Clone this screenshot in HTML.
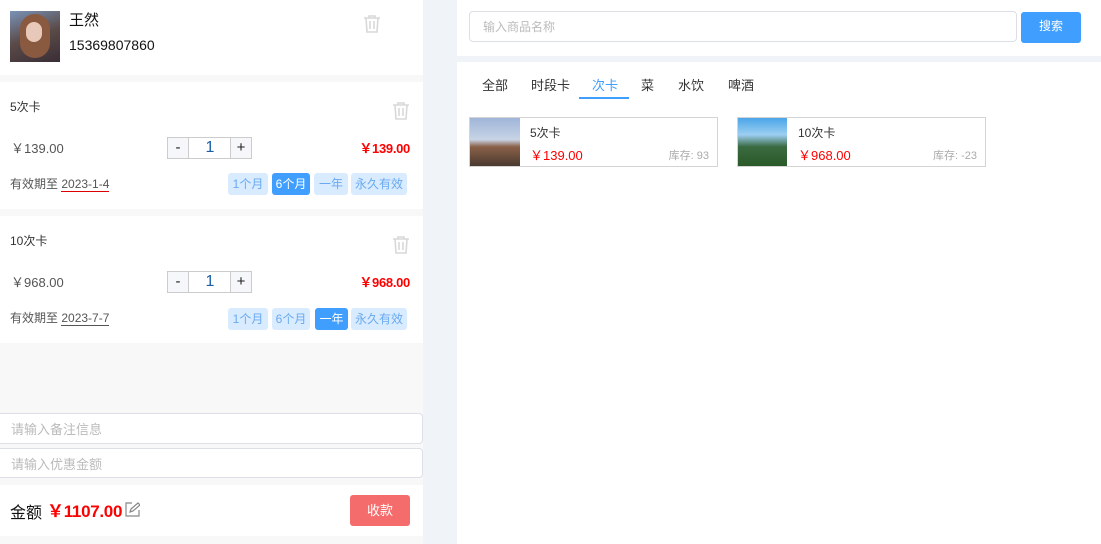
<!DOCTYPE html>
<html><head><meta charset="utf-8"><style>
*{margin:0;padding:0;box-sizing:border-box}
body{width:1101px;height:544px;overflow:hidden;background:#f0f3f7;font-family:"Liberation Sans","Noto Sans CJK SC",sans-serif;position:relative;color:#333}
.a{position:absolute}
.left{left:0;top:0;width:423px;height:544px;background:#f8f8f8}
.w{background:#fff}
.t{font-size:12px}
.tag{position:absolute;height:22px;line-height:22px;font-size:12px;text-align:center;border-radius:3px;background:#d9ecff;color:#6aa9f0}
.tag.on{background:#409eff;color:#fff}
.step{position:absolute;top:0;width:22px;height:22px;border:1px solid #ccc;background:#f5f7fa;text-align:center;line-height:19px;font-size:15px;color:#222}
.inp{position:absolute;height:22px;border:1px solid #ccc;border-left:none;border-right:none;top:0;text-align:center;font-size:16px;line-height:19px;color:#1a5ea8}
</style></head><body>
<div class="a left">
 <div class="a w" style="left:0;top:0;width:423px;height:75px">
  <div class="a" style="left:10px;top:11px;width:50px;height:51px;background:linear-gradient(160deg,#7a93b8,#5a4a48 50%,#3a2e35)"></div>
  <div class="a" style="left:20px;top:14px;width:30px;height:44px;border-radius:15px;background:#8a5a40"></div>
  <div class="a" style="left:26px;top:22px;width:16px;height:20px;border-radius:8px;background:#e8c8b8"></div>
  <div class="a" style="left:69px;top:9px;font-size:15px;color:#111">王然</div>
  <div class="a" style="left:69px;top:37px;font-size:14px;color:#111">15369807860</div>
  <svg class="a" style="left:363px;top:14px" width="18" height="20" viewBox="0 0 18 20" fill="none" stroke="#d8d8d8" stroke-width="1.6"><path d="M1 4h16M6 4V2h6v2M3 4l1 14h10l1-14M7 7v8M11 7v8"/></svg>
 </div>
 <div class="a w" style="left:0;top:82px;width:423px;height:127px">
  <div class="a t" style="left:10px;top:16px">5次卡</div>
  <svg class="a" style="left:392px;top:19px" width="18" height="20" viewBox="0 0 18 20" fill="none" stroke="#d8d8d8" stroke-width="1.6"><path d="M1 4h16M6 4V2h6v2M3 4l1 14h10l1-14M7 7v8M11 7v8"/></svg>
  <div class="a" style="left:11px;top:56px;font-size:13px;color:#555">￥139.00</div>
  <div class="a" style="left:167px;top:55px;width:85px;height:22px"><div class="step" style="left:0">-</div><div class="inp" style="left:22px;width:42px">1</div><div class="step" style="left:63px">+</div></div>
  <div class="a" style="right:13px;top:56px;font-size:13px;color:#f00;font-weight:bold;letter-spacing:-0.3px">￥139.00</div>
  <div class="a" style="left:10px;top:93px;font-size:12px;color:#555">有效期至 <span style="border-bottom:1px solid #d00">2023-1-4</span></div>
  <div class="tag" style="left:228px;top:91px;width:40px">1个月</div>
  <div class="tag on" style="left:272px;top:91px;width:38px">6个月</div>
  <div class="tag" style="left:314px;top:91px;width:34px">一年</div>
  <div class="tag" style="left:351px;top:91px;width:56px">永久有效</div>
 </div>
 <div class="a w" style="left:0;top:216px;width:423px;height:127px">
  <div class="a t" style="left:10px;top:16px">10次卡</div>
  <svg class="a" style="left:392px;top:19px" width="18" height="20" viewBox="0 0 18 20" fill="none" stroke="#d8d8d8" stroke-width="1.6"><path d="M1 4h16M6 4V2h6v2M3 4l1 14h10l1-14M7 7v8M11 7v8"/></svg>
  <div class="a" style="left:11px;top:56px;font-size:13px;color:#555">￥968.00</div>
  <div class="a" style="left:167px;top:55px;width:85px;height:22px"><div class="step" style="left:0">-</div><div class="inp" style="left:22px;width:42px">1</div><div class="step" style="left:63px">+</div></div>
  <div class="a" style="right:13px;top:56px;font-size:13px;color:#f00;font-weight:bold;letter-spacing:-0.3px">￥968.00</div>
  <div class="a" style="left:10px;top:93px;font-size:12px;color:#555">有效期至 <span style="border-bottom:1px solid #555">2023-7-7</span></div>
  <div class="tag" style="left:228px;top:92px;width:40px">1个月</div>
  <div class="tag" style="left:272px;top:92px;width:38px">6个月</div>
  <div class="tag on" style="left:315px;top:92px;width:33px">一年</div>
  <div class="tag" style="left:351px;top:92px;width:56px">永久有效</div>
 </div>
 <div class="a w" style="left:-4px;top:413px;width:427px;height:31px;border:1px solid #dcdfe6;border-radius:4px;font-size:13px;color:#bbb;padding:5px 14px">请输入备注信息</div>
 <div class="a w" style="left:-4px;top:448px;width:427px;height:30px;border:1px solid #dcdfe6;border-radius:4px;font-size:13px;color:#bbb;padding:5px 14px">请输入优惠金额</div>
 <div class="a w" style="left:0;top:485px;width:423px;height:51px">
  <div class="a" style="left:10px;top:14px;font-size:16px;color:#111">金额</div>
  <div class="a" style="left:47px;top:12px;font-size:17px;color:#f00;font-weight:bold;letter-spacing:-0.3px">￥1107.00</div>
  <svg class="a" style="left:125px;top:17px" width="15" height="15" viewBox="0 0 15 15" fill="none" stroke="#888" stroke-width="1.2"><path d="M7 1H1v13h13V8M5 10l1-3 7-6 2 2-7 6z"/></svg>
  <div class="a" style="left:350px;top:10px;width:60px;height:31px;background:#f56c6c;color:#fff;border-radius:3px;font-size:13px;text-align:center;line-height:31px">收款</div>
 </div>
</div>
<div class="a w" style="left:457px;top:0;width:644px;height:56px">
 <div class="a" style="left:12px;top:11px;width:548px;height:31px;border:1px solid #dcdfe6;border-radius:4px;font-size:12px;color:#bbb;padding:6px 13px">输入商品名称</div>
 <div class="a" style="left:564px;top:12px;width:60px;height:31px;background:#409eff;color:#fff;border-radius:3px;font-size:12px;text-align:center;line-height:29px">搜索</div>
</div>
<div class="a w" style="left:457px;top:62px;width:644px;height:482px">
 <div class="a" style="left:25px;top:13px;font-size:13px;color:#333">全部</div>
 <div class="a" style="left:74px;top:13px;font-size:13px;color:#333">时段卡</div>
 <div class="a" style="left:135px;top:13px;font-size:13px;color:#409eff">次卡</div>
 <div class="a" style="left:122px;top:35px;width:50px;height:2px;background:#409eff"></div>
 <div class="a" style="left:184px;top:13px;font-size:13px;color:#333">菜</div>
 <div class="a" style="left:221px;top:13px;font-size:13px;color:#333">水饮</div>
 <div class="a" style="left:271px;top:13px;font-size:13px;color:#333">啤酒</div>
 <div class="a" style="left:12px;top:55px;width:249px;height:50px;border:1px solid #d4d4d4">
  <div class="a" style="left:0;top:0;width:50px;height:48px;background:linear-gradient(180deg,#9fb5d8,#c8d4e6 45%,#8a6048 60%,#4a3a30)"></div>
  <div class="a t" style="left:60px;top:6px">5次卡</div>
  <div class="a" style="left:60px;top:27px;font-size:13px;color:#f00">￥139.00</div>
  <div class="a" style="right:8px;top:29px;font-size:11px;color:#aaa">库存: 93</div>
 </div>
 <div class="a" style="left:280px;top:55px;width:249px;height:50px;border:1px solid #d4d4d4">
  <div class="a" style="left:0;top:0;width:49px;height:48px;background:linear-gradient(180deg,#4aa6e8,#9ccff2 35%,#3a6a40 60%,#2a5a28)"></div>
  <div class="a t" style="left:60px;top:6px">10次卡</div>
  <div class="a" style="left:60px;top:27px;font-size:13px;color:#f00">￥968.00</div>
  <div class="a" style="right:8px;top:29px;font-size:11px;color:#aaa">库存: -23</div>
 </div>
</div>
</body></html>
